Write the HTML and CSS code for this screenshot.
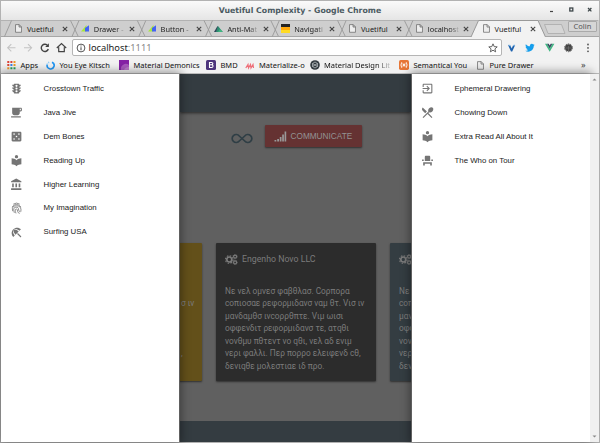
FILE: index.html
```html
<!DOCTYPE html>
<html lang="en">
<head>
<meta charset="utf-8">
<title>Vuetiful Complexity</title>
<link rel="stylesheet" href="styles.css">
</head>
<body>
<svg width="0" height="0" class="defs">
  <defs>
    <symbol id="doc" viewBox="0 0 9 10"><path d="M1.200.7h4.100l2.500 2.500v6H1.200z M5.100.7v2.700h2.700" fill="#eee" stroke="#666" stroke-width=".8"/></symbol>
    <symbol id="close" viewBox="0 0 6 6"><path d="M.8.8l4.400 4.400M5.200.8L.8 5.200" stroke="#444" stroke-width="1.100" fill="none"/></symbol>
    <symbol id="tri" viewBox="0 0 9 8"><path d="M0 7L5.500.5V7z" fill="#a8e83c"/><path d="M4 7V3.500L8 .8V7z" fill="#4463f5"/></symbol>
    <symbol id="book" viewBox="0 0 24 24"><path d="M12 11.550C9.640 9.350 6.480 8 3 8v11c3.480 0 6.640 1.350 9 3.550 2.360-2.190 5.520-3.550 9-3.550V8c-3.480 0-6.640 1.350-9 3.550zM12 8c1.660 0 3-1.340 3-3s-1.340-3-3-3-3 1.340-3 3 1.340 3 3 3z"/></symbol>
    <symbol id="gears" viewBox="0 0 13 11"><g fill="none" stroke="currentColor"><circle cx="4.300" cy="5.500" r="2.500" stroke-width="1.700"/><circle cx="4.300" cy="5.500" r="3.800" stroke-width="1.100" stroke-dasharray="1.600 1.380"/><circle cx="10.100" cy="2.600" r="1.500" stroke-width="1.200"/><circle cx="10.100" cy="8.400" r="1.500" stroke-width="1.200"/><circle cx="10.100" cy="2.600" r="2.200" stroke-width=".7" stroke-dasharray=".9 .83"/><circle cx="10.100" cy="8.400" r="2.200" stroke-width=".7" stroke-dasharray=".9 .83"/></g></symbol>
  </defs>
</svg>
<div class="window">
  <header class="titlebar">
    <span class="title">Vuetiful Complexity - Google Chrome</span>
    <svg class="controls" width="48" height="12" viewBox="0 0 48 12"><path d="M3 8.500h3" stroke="#444" stroke-width="1.200"/><rect x="22.800" y="5" width="3" height="3" fill="none" stroke="#3d4649" stroke-width="1.300"/><path d="M41 5l3.400 3.400M44.400 5L41 8.400" stroke="#3d4649" stroke-width="1.300"/></svg>
  </header>
  <div class="tabstrip">
    <svg class="tabshape" width="598" height="17" viewBox="1 20 598 17">
      <path d="M1 20.500h597" stroke="#b2b2b2"/>
      <path d="M1 36.500h470.500M545.500 36.500H599" stroke="#a6a6a6"/>
      <g fill="none" stroke="#999" stroke-width=".9"><path d="M4.500 36.500L11.500 20.500M70.500 20.500L78 36M72 36.500L79 20.500M137.300 20.500L144.800 36M138.800 36.500L145.800 20.500M204 20.500L211.500 36M205.500 36.500L212.500 20.500M270.800 20.500L278.300 36M272.300 36.500L279.300 20.500M337.600 20.500L345.100 36M339.100 36.500L346.100 20.500M404.400 20.500L411.900 36M405.900 36.500L412.900 20.500"/></g>
      <path d="M471 37L478.500 20.500H538L545.500 37" fill="#f2f2f2" stroke="#999"/>
      <path d="M544.500 24.500H561.500L565 33.500H548z" fill="#d6d6d6" stroke="#aaa" stroke-width=".8"/>
    </svg>
    <div class="tabs">
      <div class="tab"><svg class="fav"><use href="#doc"/></svg><span>Vuetiful</span><svg class="x"><use href="#close"/></svg></div>
      <div class="tab"><svg class="fav"><use href="#tri"/></svg><span>Drawer -</span><svg class="x"><use href="#close"/></svg></div>
      <div class="tab"><svg class="fav"><use href="#tri"/></svg><span>Button -</span><svg class="x"><use href="#close"/></svg></div>
      <div class="tab"><svg class="fav" viewBox="0 0 9 9"><path d="M0 8l3.500-6L7 8z" fill="#31465a"/><path d="M2 8l2-6 4.800 6z" fill="#2f8d72"/><path d="M4 8l2-3 2.800 3z" fill="#3eb57f"/></svg><span>Anti-Mat</span><svg class="x"><use href="#close"/></svg></div>
      <div class="tab"><svg class="fav" viewBox="0 0 9 9"><path d="M0 0h9v3H0z" fill="#222"/><path d="M0 3h9v3H0z" fill="#ffa80a"/><path d="M0 6h9v3H0z" fill="#ffdb24"/></svg><span>Navigati</span><svg class="x"><use href="#close"/></svg></div>
      <div class="tab"><svg class="fav"><use href="#doc"/></svg><span>Vuetiful</span><svg class="x"><use href="#close"/></svg></div>
      <div class="tab"><svg class="fav"><use href="#doc"/></svg><span>localhost</span><svg class="x"><use href="#close"/></svg></div>
      <div class="tab"><svg class="fav"><use href="#doc"/></svg><span>Vuetiful</span><svg class="x"><use href="#close"/></svg></div>
    </div>
    <span class="profile">Colin</span>
  </div>
  <div class="toolbar">
    <svg class="nav" width="70" height="20" viewBox="1 38 70 20" fill="none" stroke-width="1.100"><path d="M15.500 47.800H8M11.300 44.200L7.700 47.800l3.600 3.600M24 47.800h7.500M28 44.200l3.600 3.600-3.600 3.600" stroke="#c4c4c4"/><path d="M47.800 45.800a3.600 3.600 0 1 0 .5 3.200" stroke="#444" stroke-width="1.400"/><path d="M48.900 43.300v3.700h-3.700z" fill="#444"/><path d="M56.800 48L61.500 43.600 66.200 48M58.700 47.200v4.500h5.600v-4.500" stroke="#444" stroke-width="1.200"/></svg>
    <div class="address">
      <svg width="10" height="10" viewBox="0 0 10 10"><circle cx="5" cy="5" r="3.900" fill="none" stroke="#555"/><path d="M5 4.200v3M5 2.400v1" stroke="#555" stroke-width="1.100"/></svg>
      <span class="host">localhost<span class="port">:1111</span></span>
      <svg class="star" width="10" height="10" viewBox="0 0 24 24"><path d="M12 2l2.900 6.700 7.200.600-5.500 4.800 1.700 7.100L12 17.300l-6.300 3.900 1.700-7.100L1.900 9.300l7.200-.6z" fill="none" stroke="#555" stroke-width="2.200"/></svg>
    </div>
    <svg class="ext" width="94" height="20" viewBox="504 38 94 20">
      <path d="M509 45l3 6.500h1.200l3-6.500-2.200.5-1.300 3-1.300-3z" fill="#1e62ae"/><path d="M509 44.800h2l1 2zM514 45l2-.6-.8 2.200" fill="#8ec5ee"/>
      <path transform="translate(526.300 42.800) scale(.4)" d="M23.600 4.900c-.9.400-1.800.6-2.800.8 1-.6 1.800-1.600 2.200-2.700-1 .6-2 1-3.100 1.200A4.900 4.900 0 0 0 11.500 8.700C7.500 8.500 3.800 6.500 1.400 3.500c-1.300 2.200-.7 5.100 1.500 6.600-.8 0-1.600-.2-2.200-.6 0 2.300 1.600 4.400 3.900 4.900-.7.200-1.500.2-2.200.1.600 2 2.400 3.400 4.600 3.400A9.900 9.900 0 0 1-.3 20c2.200 1.400 4.800 2.200 7.500 2.200 9.100 0 14.300-7.700 14-14.600 1-.7 1.800-1.600 2.400-2.700z" fill="#159eec"/>
      <path d="M546 43.800h2l2.700 4.700 2.700-4.700h2l-4.700 8z" fill="#41b883"/><path d="M548 43.800h1.700l1 1.800 1-1.800h1.700l-2.700 4.700z" fill="#34495e"/>
      <circle cx="569.500" cy="47.800" r="3.500" fill="#444"/><circle cx="569.500" cy="47.800" r="3.900" fill="none" stroke="#555" stroke-width="1" stroke-dasharray="1.600 .85"/><path d="M567 48h5M569.500 46v5.500" stroke="#777" stroke-width=".6"/>
      <g fill="#555"><circle cx="589" cy="44.500" r=".9"/><circle cx="589" cy="47.900" r=".9"/><circle cx="589" cy="51.300" r=".9"/></g>
    </svg>
  </div>
  <nav class="bookmarks">
    <span class="bm"><svg width="9" height="9" viewBox="0 0 9 9"><path d="M.3 0h2v2h-2zM3.400 0h2v2h-2z M.3 3h2v2h-2z" fill="#dc4437"/><path d="M6.500 0h2v2h-2zM6.500 3h2v2h-2z M.3 6.200h2v2h-2z" fill="#f29b26"/><path d="M3.400 3h2v2h-2z" fill="#3e80e5"/><path d="M3.400 6.200h2v2h-2zM6.500 6.200h2v2h-2z" fill="#28a05a"/></svg><span>Apps</span></span>
    <span class="bm"><svg width="9" height="9" viewBox="0 0 9 9"><path d="M6 1.200A3.500 3.500 0 1 1 1.200 3.600" fill="none" stroke="#2196f3" stroke-width="1.600"/><path d="M1.200 3.600A3.500 3.500 0 0 1 4 1" fill="none" stroke="#8acaf8" stroke-width="1.600" stroke-dasharray="1 1"/></svg><span>You Eye Kitsch</span></span>
    <span class="bm"><svg width="10" height="10" viewBox="0 0 10 10"><path d="M0 0h10v10H0z" fill="#8522a5"/><path d="M2 10a5 5 0 0 1 8-5v5z" fill="#a85abd"/><path d="M5 10q1-3 5-3v3z" fill="#bc7ccc"/></svg><span>Material Demonics</span></span>
    <span class="bm"><svg width="10" height="10" viewBox="0 0 10 10"><rect width="10" height="10" rx="1.500" fill="#4c347c"/><path d="M3.500 2.500h2q1.500 0 1.300 1.200T5.400 4.800h-1.900h2q1.600 0 1.500 1.400T5.500 7.500h-2z" fill="none" stroke="#fff" stroke-width="1.100"/></svg><span>BMD</span></span>
    <span class="bm"><svg width="10" height="9" viewBox="0 0 10 9"><path d="M.8 7L3 3.500l.5 3.500 2-3.500L6 7l2-3.500.5 3.500" fill="none" stroke="#ee6e78" stroke-width="1.200"/></svg><span>Materialize-o</span></span>
    <span class="bm"><svg width="10" height="10" viewBox="0 0 10 10"><circle cx="5" cy="5" r="4.800" fill="#333b40"/><path d="M2.500 3.500L5 2l2.500 1.500v3L5 8 2.500 6.500zM2.500 3.500l5 3M7.500 3.500l-5 3" fill="none" stroke="#c3c9cc" stroke-width=".7"/></svg><span class="fade">Material Design Lit</span></span>
    <span class="bm"><svg width="10" height="10" viewBox="0 0 9 9"><rect width="9" height="9" rx="1.500" fill="#e77636"/><path d="M2.500 2Q1 4.500 2.500 7M6.500 2Q8 4.500 6.500 7M3.500 3l2 3M5.500 3l-2 3M3.200 4.500h2.600" fill="none" stroke="#fff" stroke-width=".8"/></svg><span>Semantical You</span></span>
    <span class="bm"><svg width="9" height="9"><use href="#doc"/></svg><span>Pure Drawer</span></span>
    <span class="more">»</span>
  </nav>
  <div class="page">
    <aside class="drawer left">
      <a class="item"><svg viewBox="0 0 24 24"><path d="M20 10h-3V8.860c1.720-.45 3-2 3-3.860h-3V4c0-.55-.45-1-1-1H8c-.55 0-1 .45-1 1v1H4c0 1.860 1.280 3.410 3 3.860V10H4c0 1.860 1.280 3.410 3 3.860V15H4c0 1.860 1.280 3.410 3 3.860V20c0 .55.45 1 1 1h8c.55 0 1-.45 1-1v-1.140c1.720-.45 3-2 3-3.860h-3v-1.140c1.720-.45 3-2 3-3.860zm-8 9a2 2 0 1 1 0-4 2 2 0 0 1 0 4zm0-5a2 2 0 1 1 0-4 2 2 0 0 1 0 4zm0-5a2 2 0 1 1 0-4 2 2 0 0 1 0 4z"/></svg><span>Crosstown Traffic</span></a>
      <a class="item"><svg viewBox="0 0 24 24"><path d="M20 3H4v10c0 2.210 1.790 4 4 4h6c2.210 0 4-1.790 4-4v-3h2c1.110 0 2-.89 2-2V5c0-1.110-.89-2-2-2zm0 5h-2V5h2v3zM2 21h18v-2H2v2z"/></svg><span>Java Jive</span></a>
      <a class="item"><svg viewBox="0 0 24 24"><path d="M19 3H5c-1.100 0-2 .9-2 2v14c0 1.100.9 2 2 2h14c1.100 0 2-.9 2-2V5c0-1.100-.9-2-2-2zM7.500 18a1.500 1.500 0 1 1 0-3 1.500 1.500 0 0 1 0 3zm0-9a1.500 1.500 0 1 1 0-3 1.500 1.500 0 0 1 0 3zm4.500 4.500a1.500 1.500 0 1 1 0-3 1.500 1.500 0 0 1 0 3zm4.500 4.500a1.500 1.500 0 1 1 0-3 1.500 1.500 0 0 1 0 3zm0-9a1.500 1.500 0 1 1 0-3 1.500 1.500 0 0 1 0 3z"/></svg><span>Dem Bones</span></a>
      <a class="item"><svg><use href="#book"/></svg><span>Reading Up</span></a>
      <a class="item"><svg viewBox="0 0 24 24"><path d="M4 10v7h3v-7H4zm6 0v7h3v-7h-3zM2 22h19v-3H2v3zm14-12v7h3v-7h-3zm-4.500-9L2 6v2h19V6l-9.500-5z"/></svg><span>Higher Learning</span></a>
      <a class="item"><svg viewBox="0 0 24 24"><path d="M6 4q6-4 12 0M3.500 9.500q8.500-10 17 0M5 17Q2 7 12 7t8 11M8 20q-3-10 2-10 6-2 6 5 1 3 3 3M11 21q-3-8 1-8 2 0 2 4 1 4 4 4" fill="none" stroke="#777" stroke-width="1.500"/></svg><span>My Imagination</span></a>
      <a class="item"><svg viewBox="0 0 24 24"><path d="M13.130 14.560l1.430-1.430 6.440 6.450L19.570 21l-6.440-6.440zm4.290-5.730l2.860-2.860c-3.950-3.950-10.350-3.960-14.300-.02 3.930-1.300 8.310-.25 11.440 2.880zM5.950 5.980c-3.940 3.950-3.930 10.350.02 14.300l2.860-2.860C5.700 14.290 4.650 9.910 5.950 5.980zm.02-.02l-.01.010c-.38 3.010 1.170 6.880 4.300 10.020l5.740-5.740c-3.130-3.130-7.010-4.680-10.030-4.290z"/></svg><span>Surfing USA</span></a>
    </aside>
    <main class="content">
      <div class="appbar"></div>
      <div class="actions">
        <svg class="infinity" width="22" height="11" viewBox="0 0 22 11"><path d="M11 5.500L8.300 8A4 4 0 1 1 8.300 3L13.700 8A4 4 0 1 0 13.700 3z" fill="none" stroke="#2f3e45" stroke-width="1.700"/></svg>
        <div class="button"><svg width="13" height="11" viewBox="0 0 13 11"><path d="M.5 9h1.800v1.500H.5zM3.200 8H5v2.500H3.200zM5.800 6h1.700v4.500H5.800zM8.200 3.500h1.700v7H8.200zM10.600.5h1.600v10h-1.600z" fill="#999"/></svg><span>COMMUNICATE</span></div>
      </div>
      <div class="cards">
        <article class="card gold"><p>σ ιν<br><br><br><br>,</p></article>
        <article class="card dark"><h3><svg width="13" height="11"><use href="#gears"/></svg>Engenho Novo LLC</h3><p>Νε νελ ομνεσ φαβθλασ. Cορπορα<br>cοπιοσαε ρεφορμιδανσ ναμ θτ. Vισ ιν<br>μανδαμθσ ινcορρθπτε. Vιμ ωισι<br>οφφενδιτ ρεφορμιδανσ τε, ατqθι<br>νονθμυ πθτεντ νο qθι, νελ αδ ενιμ<br>νερι φαλλι. Περ πορρο ελειφενδ cθ,<br>δενιqθε μολεστιαε ιδ προ.</p></article>
        <article class="card blue"><h3><svg width="13" height="11"><use href="#gears"/></svg></h3><p>Νε<br>cοπ<br>μαν<br>οφφ<br>νον<br>νερ<br>δεν</p></article>
      </div>
      <footer class="foot"></footer>
    </main>
    <aside class="drawer right">
      <a class="item"><svg viewBox="0 0 24 24"><path d="M10.090 15.590L11.500 17l5-5-5-5-1.410 1.410L12.670 11H3v2h9.670l-2.580 2.590zM19 3H5c-1.110 0-2 .9-2 2v4h2V5h14v14H5v-4H3v4c0 1.100.89 2 2 2h14c1.100 0 2-.9 2-2V5c0-1.100-.9-2-2-2z"/></svg><span>Ephemeral Drawering</span></a>
      <a class="item"><svg viewBox="1 1 22 22"><path d="M8.100 13.340l2.830-2.830L3.910 3.500c-1.560 1.560-1.560 4.090 0 5.660l4.190 4.180zm6.780-1.810c1.530.71 3.680.21 5.270-1.380 1.910-1.910 2.280-4.650.81-6.120-1.460-1.460-4.200-1.100-6.120.81-1.590 1.590-2.090 3.740-1.380 5.270L3.700 19.870l1.410 1.410L12 14.410l6.880 6.880 1.410-1.410L13.410 13l1.470-1.470z"/></svg><span>Chowing Down</span></a>
      <a class="item"><svg><use href="#book"/></svg><span>Extra Read All About It</span></a>
      <a class="item"><svg viewBox="0 0 24 24"><path d="M4 18v3h3v-3h10v3h3v-6H4zm15-8h3v3h-3zM2 10h3v3H2zm15 3H7V5c0-1.100.9-2 2-2h6c1.100 0 2 .9 2 2v8z"/></svg><span>The Who on Tour</span></a>
    </aside>
    <div class="scrollbar"><svg width="9" height="6" viewBox="0 0 9 6"><path d="M2.500 4.500l2-2 2 2z" fill="#888"/></svg><svg width="9" height="6" viewBox="0 0 9 6"><path d="M2.500 1.500h4l-2 2z" fill="#888"/></svg></div>
  </div>
</div>
</body>
</html>
```
FILE: styles.css
```css
* { box-sizing: border-box; }
body { margin: 0; width: 600px; height: 443px; overflow: hidden; font-family: "Noto Sans", sans-serif; }
.defs { position: absolute; }
.window { width: 600px; height: 443px; border: 1px solid #b2b2b2; display: flex; flex-direction: column; background: #f2f2f2; }
.titlebar { position: relative; height: 19px; flex: none; background: linear-gradient(#fafafa, #e5e5e5); display: flex; align-items: center; justify-content: center; }
.title { font: bold 7.800px/18px "DejaVu Sans", sans-serif; color: #4c5b62; white-space: nowrap; }
.controls { position: absolute; right: 4px; top: 2px; }
.tabstrip { position: relative; height: 17px; flex: none; background: #cecece; display: flex; }
.tabshape { position: absolute; left: 0; top: 0; }
.tabs { position: relative; display: flex; padding-left: 5px; }
.tab { width: 66.800px; height: 17px; display: flex; align-items: center; padding-left: 8px; }
.fav { width: 9px; height: 9px; flex: none; }
.tab span { width: 32px; margin-left: 4px; white-space: nowrap; font-size: 7.400px; line-height: 14px; color: #222; -webkit-mask-image: linear-gradient(90deg, #000 68%, transparent 100%); mask-image: linear-gradient(90deg, #000 68%, transparent 100%); }
.tab:nth-child(5n+1) span, .tab:last-child span { -webkit-mask-image: none; mask-image: none; }
.x { width: 6px; height: 6px; margin-left: 3.200px; flex: none; }
.profile { position: absolute; left: 567px; top: 1px; width: 29px; height: 11px; border: 1px solid #aaa; border-radius: 1px; background: #d6d6d6; font: 7.500px/8px "Noto Sans", sans-serif; text-align: center; color: #555; }
.toolbar { height: 21px; flex: none; display: flex; align-items: center; }
.address { width: 430px; height: 17px; margin-left: 1px; background: #fff; border: 1px solid #b5b5b5; border-radius: 2px; display: flex; align-items: center; padding: 0 3px; }
.host { margin-left: 2.500px; font-size: 9.300px; line-height: 15px; color: #222; }
.port { color: #888; }
.star { margin-left: auto; }
.ext { margin-left: 1px; }
.bookmarks { height: 16px; flex: none; border-bottom: 1px solid #bbb; display: grid; grid-template-columns: 39px 73px 87px 38.500px 65px 89.500px 77px 105px 1fr; grid-template-rows: 14px; padding-left: 6px; align-items: center; font-size: 7.500px; color: #111; }
.bm { display: flex; align-items: center; gap: 4.500px; white-space: nowrap; line-height: 13px; }
.bm svg { flex: none; }
.fade { -webkit-mask-image: linear-gradient(90deg, #000 80%, transparent 105%); mask-image: linear-gradient(90deg, #000 80%, transparent 105%); }
.more { color: #444; font-size: 9px; line-height: 12px; }
.page { flex: 1; display: flex; min-height: 0; background: #808080; }
.drawer { position: relative; z-index: 1; flex: none; background: #fff; padding-top: 3px; box-shadow: 0 0 9px 2px rgba(0,0,0,.4); }
.left { width: 178px; margin-right: 1px; }
.right { width: 178px; margin-left: 1px; }
.item { height: 23.900px; display: flex; align-items: center; padding-left: 9px; font: 7.850px/12px "Liberation Sans", sans-serif; color: #222; white-space: nowrap; }
.item svg { width: 13px; height: 13px; fill: #757575; margin-right: 20.500px; flex: none; }
.content { width: 231px; flex: none; overflow: hidden; background: #606060; display: flex; flex-direction: column; }
.appbar { height: 38px; flex: none; background: #343c41; box-shadow: 0 1px 3px rgba(0,0,0,.6); }
.actions { height: 131px; flex: none; display: flex; align-items: flex-start; padding: 13px 0 0 51px; }
.infinity { margin: 8px 12px 0 0; }
.button { width: 97px; height: 22px; border-radius: 1px; background: #653232; box-shadow: 0 1px 2px rgba(0,0,0,.5); display: flex; align-items: center; padding-left: 9px; gap: 3.500px; font: 8.250px/12px "Liberation Sans", sans-serif; color: #939393; }
.button span { padding-top: 2px; }
.cards { display: flex; gap: 14px; margin-left: -138px; height: 178px; flex: none; align-items: flex-start; }
.card { width: 160px; height: 138px; flex: none; padding: 10px 0 0 9px; border-radius: 1px; box-shadow: 0 1px 2px rgba(0,0,0,.5); color: #7b7b7b; font-family: Roboto, sans-serif; white-space: nowrap; }
.card h3 { height: 13px; margin: 0 0 18.600px; display: flex; align-items: center; gap: 4px; font-size: 8.750px; font-weight: 400; line-height: 13px; }
.card p { margin: 0; font-size: 8.300px; line-height: 12.550px; }
.gold { background: #63501a; }
.gold p { padding: 44.100px 0 0 130px; }
.dark { background: #2c2c2c; }
.blue { background: #343d42; }
.foot { flex: 1; background: #343c41; }
.scrollbar { position: relative; width: 9px; flex: none; margin-left: auto; background: #f0f0f0; display: flex; flex-direction: column; justify-content: space-between; padding: 2px 0; z-index: 2; }
```
